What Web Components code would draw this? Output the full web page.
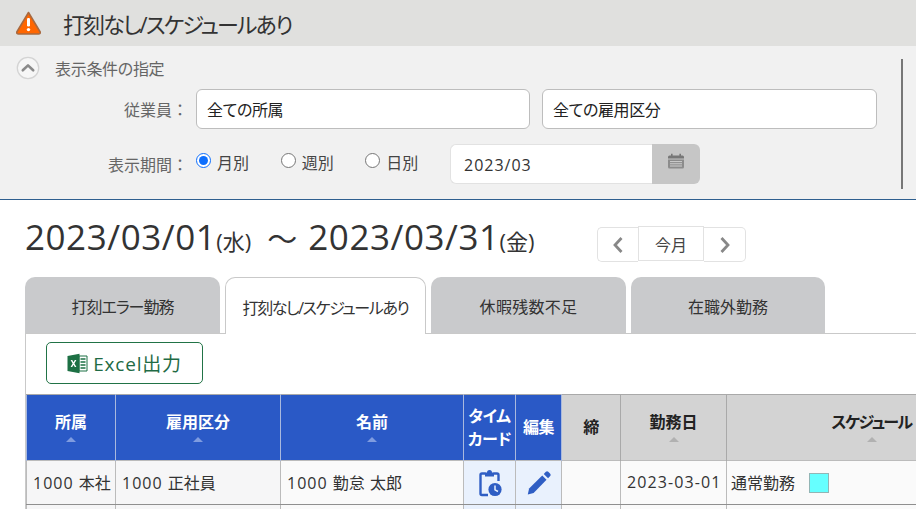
<!DOCTYPE html>
<html lang="ja">
<head>
<meta charset="utf-8">
<title>打刻なし/スケジュールあり</title>
<style>
  html, body { margin: 0; padding: 0; height: 509px; overflow: hidden; background: #fff; }
  body { font-family: "Open Sans", "Noto Sans CJK JP", sans-serif; font-size: 16px; font-feature-settings: "palt"; color: #333; }
</style>
</head>
<body>
<page-title>打刻なし/スケジュールあり</page-title>
<filter-panel></filter-panel>
<date-heading></date-heading>
<tab-bar></tab-bar>
<result-area></result-area>

<script>
/* header strip */
class PageTitle extends HTMLElement {
  constructor() {
    super();
    this.attachShadow({ mode: "open" }).innerHTML = `
      <style>
        :host { display: flex; align-items: center; height: 46px; background: #e0e0de; padding-left: 15px; box-sizing: border-box; }
        svg { width: 27px; height: 26px; margin-right: 21px; flex: none; }
        span { font-size: 22px; letter-spacing: -1.9px; color: #333; }
      </style>
      <svg viewBox="0 0 27 26">
        <path d="M13.5 2.5 L25.2 22 Q25.5 24 23.5 24 H3.5 Q1.5 24 1.8 22 Z" fill="#ff6600" stroke="#a8693f" stroke-width="1.6" stroke-linejoin="round"/>
        <rect x="12" y="8" width="3" height="8.5" rx="1.2" fill="#fff"/>
        <circle cx="13.5" cy="19.6" r="1.7" fill="#fff"/>
      </svg>
      <span><slot></slot></span>`;
  }
}
customElements.define("page-title", PageTitle);

class TextField extends HTMLElement {
  constructor() {
    super();
    this.attachShadow({ mode: "open" }).innerHTML = `
      <style>
        :host { display: flex; align-items: center; box-sizing: border-box; height: 40px; background: #fff;
          border: 1px solid #bdbdbd; border-radius: 6px; padding-left: 10px; letter-spacing: -.4px; color: #222; }
      </style><slot></slot>`;
  }
}
customElements.define("text-field", TextField);

class RadioOpt extends HTMLElement {
  constructor() {
    super();
    const on = this.hasAttribute("checked");
    this.attachShadow({ mode: "open" }).innerHTML = `
      <style>
        :host { display: inline-flex; align-items: center; color: #444; margin-top: -4px; }
        i { width: 15px; height: 15px; border-radius: 50%; box-sizing: border-box; margin: -3px 6px 0 0; background: #fff;
            border: ${on ? "1.5px solid #0d6efd" : "1px solid #767676"}; position: relative; flex: none; }
        i.on::after { content: ""; position: absolute; inset: 2px; border-radius: 50%; background: #0d6efd; }
      </style>
      <i class="${on ? "on" : ""}"></i><slot></slot>`;
  }
}
customElements.define("radio-opt", RadioOpt);

class FilterPanel extends HTMLElement {
  constructor() {
    super();
    this.attachShadow({ mode: "open" }).innerHTML = `
      <style>
        :host { display: block; box-sizing: border-box; height: 154px; background: #f1f1f1; border-bottom: 1px solid #2f5f8f; padding: 12px 13px 0 16px; }
        .wrap { display: flex; height: 131px; }
        .main { flex: 1; }
        .rule { width: 2px; background: #777; height: 130px; margin-top: 1px; }
        .head { display: flex; align-items: center; height: 20px; margin-bottom: 11px; color: #666; letter-spacing: -.3px; }
        .head svg { width: 24px; height: 24px; margin-right: 15px; flex: none; }
        .row { display: flex; align-items: center; height: 40px; }
        .label { width: 172px; text-align: right; color: #666; margin-right: 8px; white-space: nowrap; font-feature-settings: normal; }
        .row.a { gap: 12px; margin-bottom: 15px; }
        .row.a .label { margin-right: -4px; }
        .row.a text-field { width: 334px; }
        .row.a text-field + text-field { width: 335px; }
        .radios { display: flex; width: 254px; }
        .radios radio-opt { width: 85px; }
        .date { display: flex; width: 250px; height: 40px; }
        .date div { flex: 1; display: flex; align-items: center; box-sizing: border-box; background: #fff; border: 1px solid #e2e2e2; border-right: 0;
          border-radius: 6px 0 0 6px; padding: 2px 0 0 13px; letter-spacing: 1px; color: #333; }
        .date button { width: 48px; border: 0; padding: 0 0 6px; background: #c6c6c6; border-radius: 0 6px 6px 0; display: flex; align-items: center; justify-content: center; }
        .date svg { width: 18px; height: 16px; }
      </style>
      <div class="wrap">
        <div class="main">
          <div class="head">
            <svg viewBox="0 0 24 24">
              <circle cx="12" cy="12" r="10.7" fill="#f6f6f6" stroke="#d4d4d4" stroke-width="1.3"/>
              <path d="M6.8 14.3 L12 9.4 L17.2 14.3" fill="none" stroke="#8a8a8a" stroke-width="2.6" stroke-linecap="round" stroke-linejoin="round"/>
            </svg>
            <span>表示条件の指定</span>
          </div>
          <div class="row a">
            <span class="label">従業員：</span>
            <text-field>全ての所属</text-field>
            <text-field>全ての雇用区分</text-field>
          </div>
          <div class="row">
            <span class="label">表示期間：</span>
            <div class="radios">
              <radio-opt checked>月別</radio-opt>
              <radio-opt>週別</radio-opt>
              <radio-opt>日別</radio-opt>
            </div>
            <div class="date">
              <div>2023/03</div>
              <button aria-label="カレンダー">
                <svg viewBox="0 0 18 16">
                  <path d="M1 4 a1.5 1.5 0 0 1 1.5-1.5 H4 V.8 H5.6 V2.5 H12.4 V.8 H14 V2.5 H15.5 A1.5 1.5 0 0 1 17 4 V5.5 H1 Z" fill="#777"/>
                  <path d="M1 6.5 H17 V14 a1.5 1.5 0 0 1-1.5 1.5 H2.5 A1.5 1.5 0 0 1 1 14 Z" fill="#8c8c8c"/>
                  <path d="M3 8.6 H15 M3 10.8 H15 M3 13 H15" stroke="#d0d0d0" stroke-width="1"/>
                </svg>
              </button>
            </div>
          </div>
        </div>
        <div class="rule"></div>
      </div>`;
  }
}
customElements.define("filter-panel", FilterPanel);

class DateHeading extends HTMLElement {
  constructor() {
    super();
    this.attachShadow({ mode: "open" }).innerHTML = `
      <style>
        :host { display: flex; align-items: flex-start; height: 77px; padding: 15px 0 0 25px; box-sizing: border-box; color: #333; }
        .d { display: flex; align-items: baseline; font-size: 35px; line-height: 44px; white-space: nowrap; width: 572px; }
        b { font-weight: 400; letter-spacing: .55px; }
        small { font-size: 22px; }
        em { font-style: normal; font-size: 30px; margin: 0 11px 0 16px; }
        .nav { display: flex; margin-top: 11px; align-items: flex-start; }
        .nav button { box-sizing: border-box; height: 35px; background: #fff; border: 1px solid #e2e2e2; padding: 0; display: flex; align-items: center; justify-content: center; font: inherit; color: #444; }
        .p { width: 41px; border-radius: 5px 0 0 5px; margin-top: 1px; border-right: 0 !important; }
        .t { width: 66px; }
        .n { width: 42px; border-radius: 0 5px 5px 0; margin-top: 1px; border-left: 0 !important; }
        svg { width: 12px; height: 18px; }
      </style>
      <div class="d"><b>2023/03/01</b><small>(水)</small><em>〜</em><b>2023/03/31</b><small>(金)</small></div>
      <div class="nav">
        <button class="p" aria-label="前月"><svg viewBox="0 0 12 18"><path d="M9.5 2 L3 9 L9.5 16" fill="none" stroke="#888" stroke-width="2.8"/></svg></button>
        <button class="t">今月</button>
        <button class="n" aria-label="次月"><svg viewBox="0 0 12 18"><path d="M2.5 2 L9 9 L2.5 16" fill="none" stroke="#888" stroke-width="2.8"/></svg></button>
      </div>`;
  }
}
customElements.define("date-heading", DateHeading);

class TabItem extends HTMLElement {
  constructor() {
    super();
    this.attachShadow({ mode: "open" }).innerHTML = `
      <style>
        :host { display: flex; align-items: center; justify-content: center; box-sizing: border-box; height: 56px; background: #c9cacc;
          border-radius: 10px 10px 0 0; color: #333; white-space: nowrap; padding-top: 1px; }
        :host([active]) { background: #fff; border: 1px solid #c9c9c9; border-bottom: 0; height: 57px; margin-bottom: -1px; position: relative; }
      </style><slot></slot>`;
  }
}
customElements.define("tab-item", TabItem);

class TabBar extends HTMLElement {
  constructor() {
    super();
    this.attachShadow({ mode: "open" }).innerHTML = `
      <style>
        :host { display: flex; gap: 5px; padding-left: 25px; height: 56px; }
      </style>
      <tab-item style="width:195px; letter-spacing:-1px">打刻エラー勤務</tab-item>
      <tab-item style="width:201px; letter-spacing:-1.4px" active>打刻なし/スケジュールあり</tab-item>
      <tab-item style="width:195px; letter-spacing:.3px">休暇残数不足</tab-item>
      <tab-item style="width:194px">在職外勤務</tab-item>`;
  }
}
customElements.define("tab-bar", TabBar);

class ResultArea extends HTMLElement {
  constructor() {
    super();
    const arrow = `<i></i>`;
    this.attachShadow({ mode: "open" }).innerHTML = `
      <style>
        :host { display: block; margin-left: 25px; border-left: 1px solid #c9c9c9; border-top: 1px solid #c9c9c9; height: 176px; overflow: hidden; }
        .xl { display: inline-flex; align-items: center; justify-content: center; box-sizing: border-box; width: 157px; height: 42px; margin: 8px 0 10px 20px;
          border: 1px solid #217346; border-radius: 5px; background: #fff; color: #1f6b45; font: inherit; font-size: 19px; padding: 0; gap: 5px; }
        .xl span { letter-spacing: .8px; }
        .xl svg { width: 21px; height: 21px; }
        .tw { display: block; width: 1100px; }
        table { border-collapse: collapse; table-layout: fixed; width: 1100px; }
        th { height: 66px; padding: 0 0 10px; font-weight: 700; line-height: 23px; position: relative; border: 1px solid #a9a9a9; border-width: 1px 1px 0 1px; box-sizing: border-box; }
        th.b { background: #2a59c6; color: #fff; border-color: #a9a9a9 #a9b9de; }
        th.g { background: #d3d3d3; color: #222; }
        th.s { padding-bottom: 0; letter-spacing: -.4px; }
        th.k { letter-spacing: -1.6px; }
        th i { position: absolute; left: 50%; bottom: 18px; margin-left: -5px; width: 0; height: 0; border: 5px solid transparent; border-top: 0; border-bottom-width: 5px; }
        th.b i { border-bottom-color: #7f9ce0; }
        th.g i { border-bottom-color: #b1b1b1; }
        td { height: 44px; box-sizing: border-box; border: 1px solid #bbb; border-bottom-color: #8f8f8f; background: #fafafa; color: #333; padding: 0 0 1px 6px; white-space: nowrap; word-spacing: 1px; }
        td.l { background: #f6f6f7; }
        td.ic { background: #e9f1fd; text-align: center; padding: 0; }
        td svg { display: block; margin: 0 auto; }
        td span.n { letter-spacing: 1px; }
        td span.d { letter-spacing: 1.1px; }
        .sw { display: inline-block; width: 20px; height: 20px; box-sizing: border-box; background: #66ffff; border: 1px solid #92b5b5; vertical-align: -4px; margin-left: 14px; }
        tr.e td { height: 20px; }
      </style>
      <button class="xl">
        <svg viewBox="0 0 21 21">
          <path d="M12 3 H20 V18 H12 Z" fill="#fff" stroke="#1d7044" stroke-width="1"/>
          <path d="M13.5 6 H18.5 M13.5 9 H18.5 M13.5 12 H18.5 M13.5 15 H18.5" stroke="#1d7044" stroke-width="1.6"/>
          <path d="M0.5 3 L12.5 .8 V20.2 L0.5 18 Z" fill="#1d7044"/>
          <path d="M3.6 7 L5.3 7 L6.5 9.3 L7.8 7 L9.4 7 L7.4 10.5 L9.4 14 L7.8 14 L6.5 11.7 L5.2 14 L3.6 14 L5.6 10.5 Z" fill="#fff"/>
        </svg>
        <span>Excel出力</span>
      </button>
      <div class="tw"><table>
        <colgroup><col style="width:89px"><col style="width:165px"><col style="width:183px"><col style="width:52px"><col style="width:46px"><col style="width:59px"><col style="width:106px"><col style="width:290px"><col></colgroup>
        <tr>
          <th class="b">所属${arrow}</th><th class="b">雇用区分${arrow}</th><th class="b">名前${arrow}</th>
          <th class="b s">タイム<br>カード</th><th class="b s">編集</th><th class="g s">締</th>
          <th class="g">勤務日${arrow}</th><th class="g k">スケジュール${arrow}</th><th class="g"></th>
        </tr>
        <tr>
          <td class="l"><span class="n">1000</span> 本社</td><td class="l"><span class="n">1000</span> 正社員</td><td><span class="n">1000</span> 勤怠 太郎</td>
          <td class="ic"><svg width="26" height="30" viewBox="0 0 26 30">
            <path d="M8.5 5.5 H5 A1.5 1.5 0 0 0 3.5 7 V25.5 A1.5 1.5 0 0 0 5 27 H11 M16.5 5.5 H20 A1.5 1.5 0 0 1 21.5 7 V13" fill="none" stroke="#2f5ec4" stroke-width="2.4"/>
            <path d="M8 8.5 V4.5 H10 A2.5 2.5 0 0 1 15 4.5 H17 V8.5 Z" fill="#2f5ec4"/>
            <circle cx="18" cy="21.5" r="6.6" fill="#2f5ec4"/>
            <path d="M18 17.5 V21.8 L21 23.5" fill="none" stroke="#e9f1fd" stroke-width="1.5"/>
          </svg></td>
          <td class="ic"><svg width="28" height="28" viewBox="0 0 26 26">
            <path d="M19.4 2.6 a1.6 1.6 0 0 1 2.2 0 L23.4 4.4 a1.6 1.6 0 0 1 0 2.2 L21.4 8.6 17.4 4.6 Z" fill="#2f5ec4"/>
            <path d="M16 6 L20 10 L8 22.4 L2.6 23.6 L3.8 18.2 Z" fill="#2f5ec4"/>
          </svg></td>
          <td></td><td><span class="d">2023-03-01</span></td><td style="padding-left:4px">通常勤務<span class="sw"></span></td><td></td>
        </tr>
        <tr class="e"><td class="l"></td><td class="l"></td><td></td><td class="ic"></td><td class="ic"></td><td></td><td></td><td></td><td></td></tr>
      </table></div>`;
  }
}
customElements.define("result-area", ResultArea);
</script>
</body>
</html>
